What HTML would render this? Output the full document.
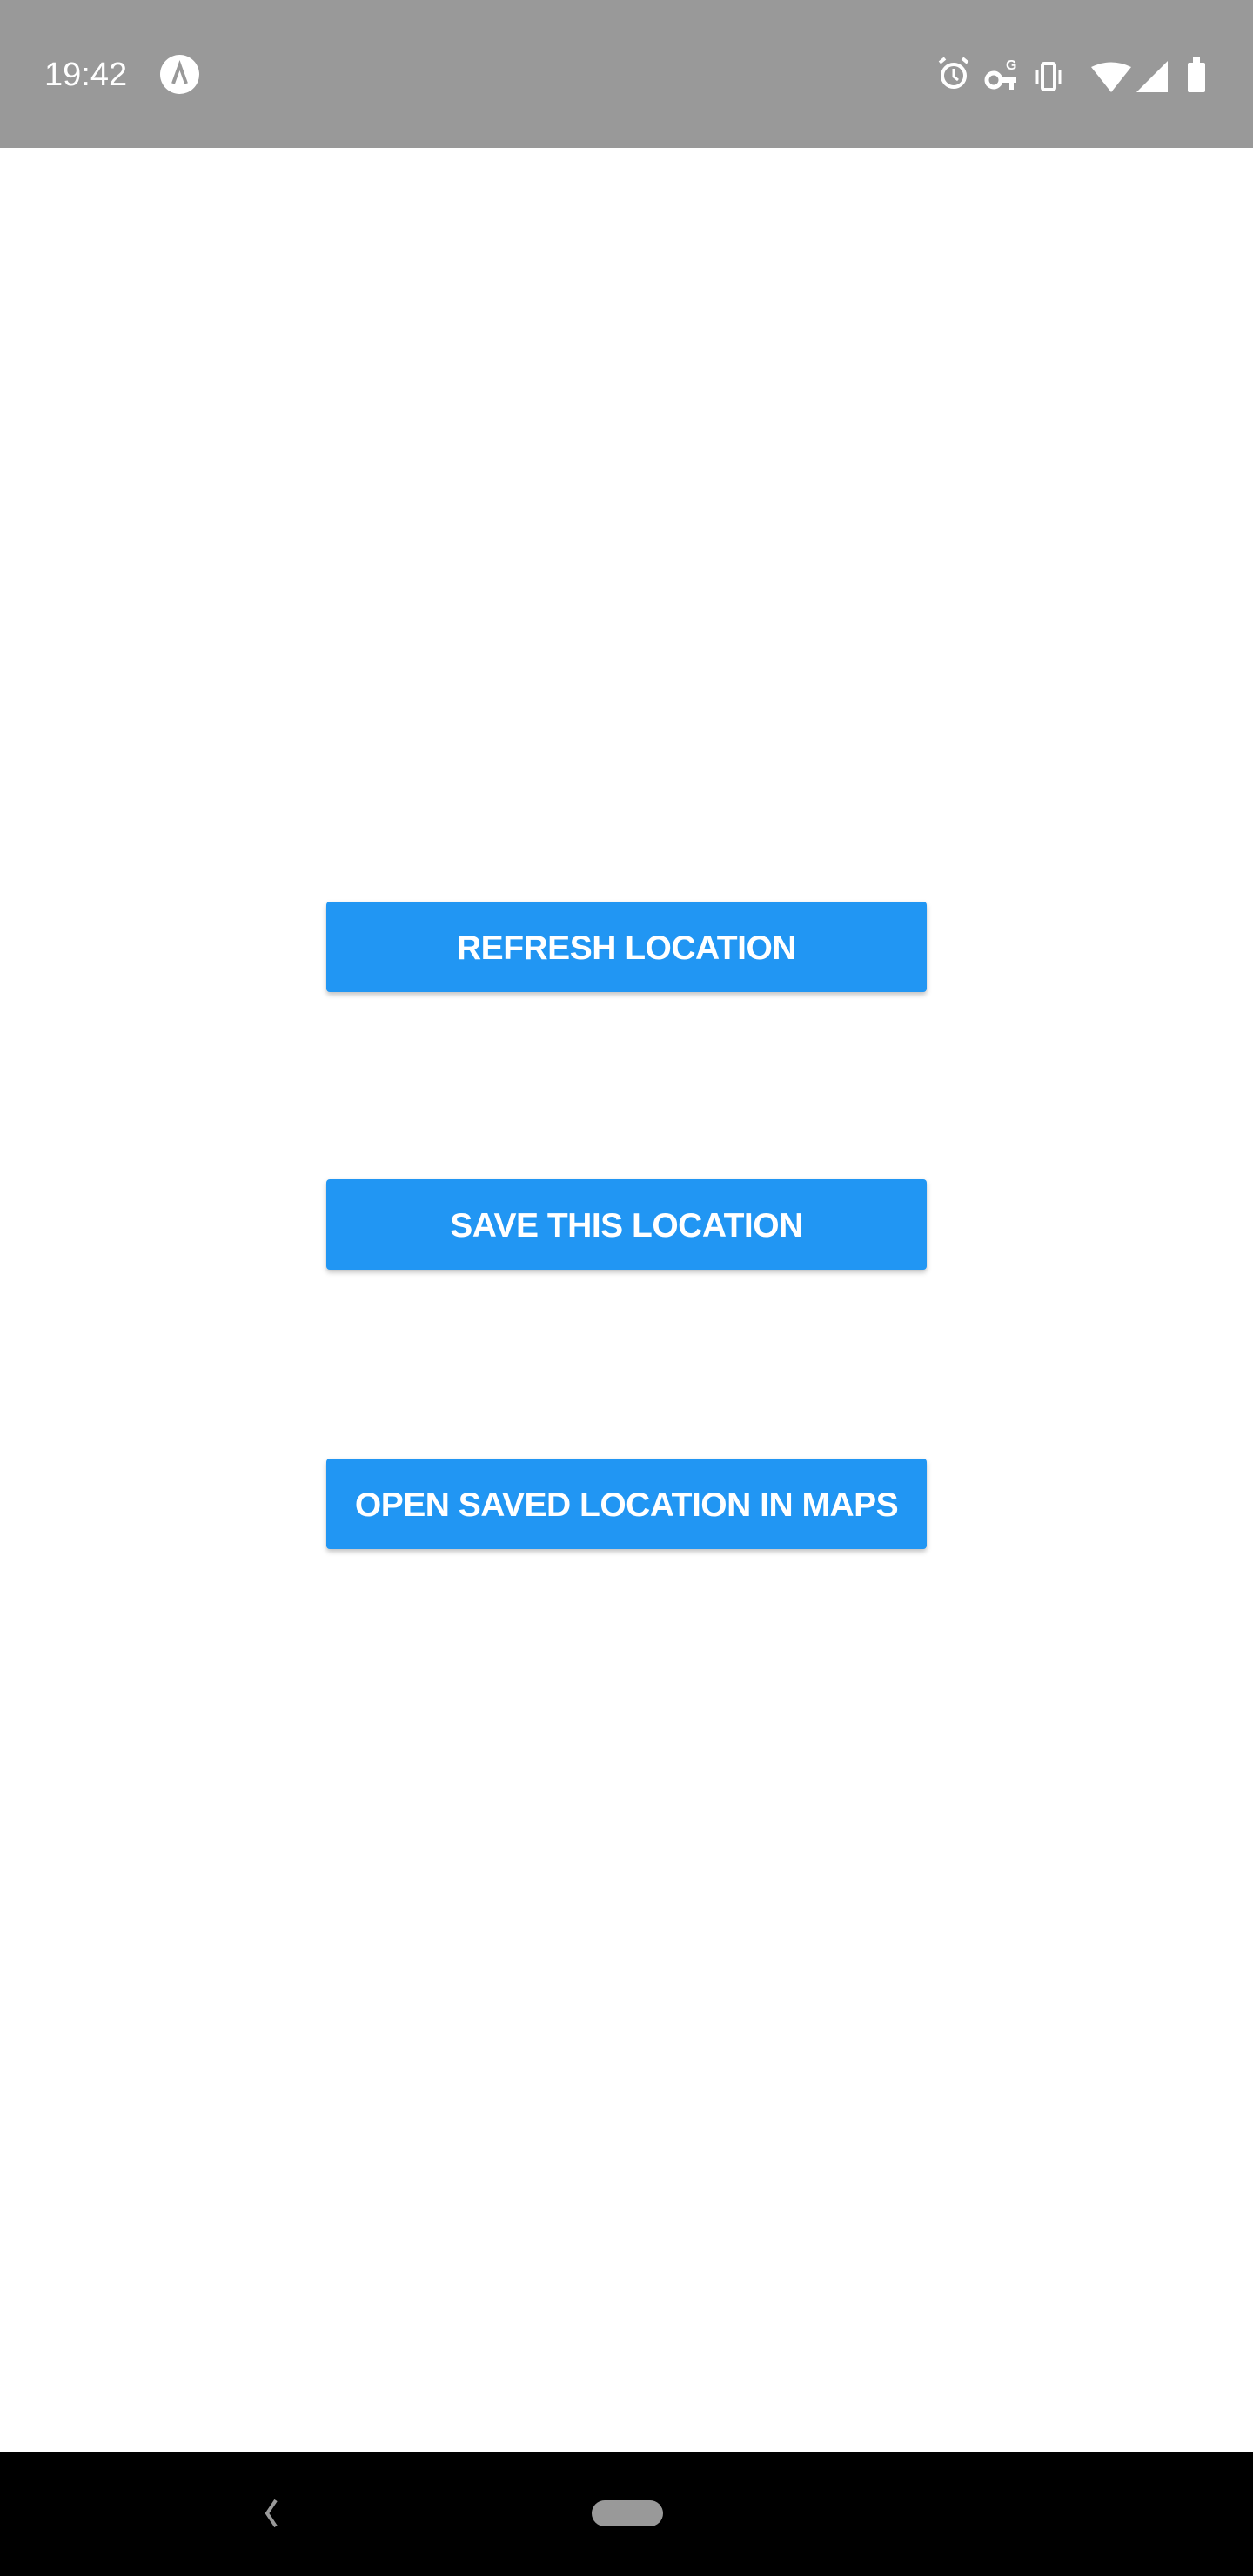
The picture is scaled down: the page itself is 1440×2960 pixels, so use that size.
<!DOCTYPE html>
<html><head><meta charset="utf-8"><style>
html,body{margin:0;padding:0;width:1440px;height:2960px;background:#fff;position:relative;overflow:hidden;font-family:"Liberation Sans",sans-serif}
.sb{position:absolute;left:0;top:0;width:1440px;height:170px;background:#999}
.nav{position:absolute;left:0;top:2817px;width:1440px;height:143px;background:#000}
.btn{position:absolute;left:375px;width:690px;height:104px;background:#2196F3;border-radius:4px;box-shadow:0 3px 6px rgba(0,0,0,.25);color:#fff;font-weight:bold;font-size:39px;display:flex;align-items:center;justify-content:center;letter-spacing:-0.5px;padding-top:3px;box-sizing:border-box}
</style></head><body>
<div class="sb">
<div style="position:absolute;left:51px;top:65px;font-size:38px;color:#fff">19:42</div>
<div style="position:absolute;left:184px;top:63px;width:45px;height:45px;border-radius:50%;background:#fff"></div>
<svg style="position:absolute;left:184px;top:63px" width="45" height="45"><path d="M15 33 L22.5 12 L30 33" stroke="#999" stroke-width="4" fill="none"/></svg>
<svg style="position:absolute;left:1070px;top:60px" width="340" height="50" fill="#fff" stroke="#fff">
<circle cx="26" cy="27" r="13" fill="none" stroke-width="4"/><path d="M26 19v9l5 4" fill="none" stroke-width="3"/><path d="M10 12l6-5M42 12l-6-5" stroke-width="4"/>
<circle cx="72" cy="32" r="8" fill="none" stroke-width="5"/><rect x="78" y="29" width="20" height="6" stroke="none"/><rect x="90" y="29" width="5" height="14" stroke="none"/>
<text x="86" y="20" font-size="16" font-weight="bold" stroke="none" font-family="Liberation Sans">G</text>
<rect x="128" y="13" width="14" height="30" rx="2" fill="none" stroke-width="4"/><path d="M122 20v16M148 20v16" stroke-width="3"/>
<path d="M184 17 Q207 6 230 17 L207 46Z" stroke="none"/>
<path d="M272 10 L272 46 L236 46Z" stroke="none"/>
<rect x="295" y="12" width="20" height="34" rx="2" stroke="none"/><rect x="301" y="6" width="8" height="7" stroke="none"/>
</svg>
</div>
<div class="btn" style="top:1036px">REFRESH LOCATION</div>
<div class="btn" style="top:1355px">SAVE THIS LOCATION</div>
<div class="btn" style="top:1676px">OPEN SAVED LOCATION IN MAPS</div>
<div class="nav">
<svg style="position:absolute;left:295px;top:54px" width="30" height="34"><path d="M22 2 L12 17 L22 32" stroke="#999" stroke-width="4" fill="none"/></svg>
<div style="position:absolute;left:680px;top:56px;width:82px;height:30px;border-radius:15px;background:#999"></div>
</div>
</body></html>
